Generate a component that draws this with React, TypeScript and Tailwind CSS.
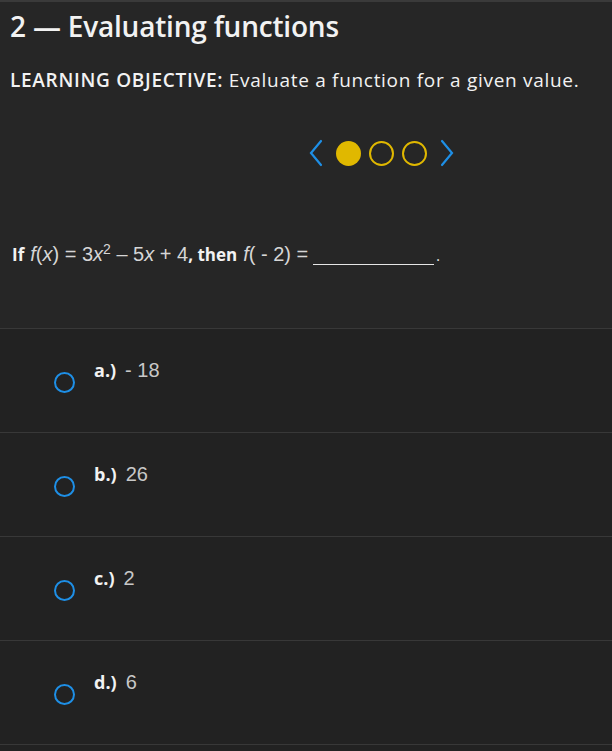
import React from 'react';

const options = [
  { key: 'a', value: '- 18' },
  { key: 'b', value: '26' },
  { key: 'c', value: '2' },
  { key: 'd', value: '6' },
];

function Chevron({ dir }: { dir: 'left' | 'right' }) {
  return (
    <svg width="16" height="28" viewBox="0 0 16 28" fill="none">
      <path
        d={dir === 'left' ? 'M13 2 L3 14 L13 26' : 'M3 2 L13 14 L3 26'}
        stroke="#1e8fe6"
        strokeWidth="2.2"
        strokeLinecap="round"
        strokeLinejoin="miter"
      />
    </svg>
  );
}

export default function App() {
  return (
    <div className="w-[612px] h-[751px] bg-[#262626] border-t-2 border-[#3a3a3a] overflow-hidden font-['Open_Sans',sans-serif] text-[#f2f2f2]">
      {/* Header */}
      <div className="px-[10px] pt-[7px]">
        <h1 className="text-[28px] font-semibold leading-[34px] tracking-[-0.2px]">2 — Evaluating functions</h1>
        <p className="mt-[25px] text-[19px] leading-[24px] tracking-[0.7px]">
          <span className="font-semibold">LEARNING OBJECTIVE:</span> Evaluate a function for a given value.
        </p>
      </div>

      {/* Pagination */}
      <div className="flex items-center justify-center gap-[8px] mt-[47px] pl-[150px]">
        <Chevron dir="left" />
        <div className="flex items-center gap-[8px] px-[4px]">
          <span className="w-[25px] h-[25px] rounded-full bg-[#e0b800]" />
          <span className="w-[25px] h-[25px] rounded-full border-[2px] border-[#e0b800]" />
          <span className="w-[25px] h-[25px] rounded-full border-[2px] border-[#e0b800]" />
        </div>
        <Chevron dir="right" />
      </div>

      {/* Question */}
      <div className="px-[12px] mt-[72px] h-[89px] text-[17px]">
        <p className="flex items-baseline whitespace-nowrap">
          <span className="font-bold">If</span>
          <span className="ml-[6px] font-['Liberation_Sans',sans-serif] text-[#d6d6d6] text-[20px]">
            <i>f</i>(<i>x</i>) = 3<i>x</i>
            <sup className="text-[14px]">2</sup>
            {' '}– 5<i>x</i> + 4
          </span>
          <span className="font-bold">, then</span>
          <span className="ml-[6px] font-['Liberation_Sans',sans-serif] text-[#d6d6d6] text-[20px]">
            <i>f</i>( - 2) =
          </span>
          <span className="ml-[5px] inline-block w-[121px] border-b-[1.5px] border-[#e5e5e5] translate-y-[4px]" />
          <span className="ml-[2px] text-[14px]">.</span>
        </p>
      </div>

      {/* Options */}
      <div className="bg-[#222222]">
        {options.map((o) => (
          <div key={o.key} className="h-[104px] border-t border-[#383838] flex items-start pl-[54px] pt-[26px]">
            <span className="mt-[17px] w-[21px] h-[21px] rounded-full border-[2.5px] border-[#1e8fe6]" />
            <div className="ml-[19px] flex items-baseline">
              <span className="font-bold text-[18px]">{o.key}.)</span>
              <span className="ml-[9px] font-['Liberation_Sans',sans-serif] text-[#c8c8c8] text-[20px]">
                {o.value}
              </span>
            </div>
          </div>
        ))}
        <div className="border-t border-[#383838] h-[10px]" />
      </div>
    </div>
  );
}
